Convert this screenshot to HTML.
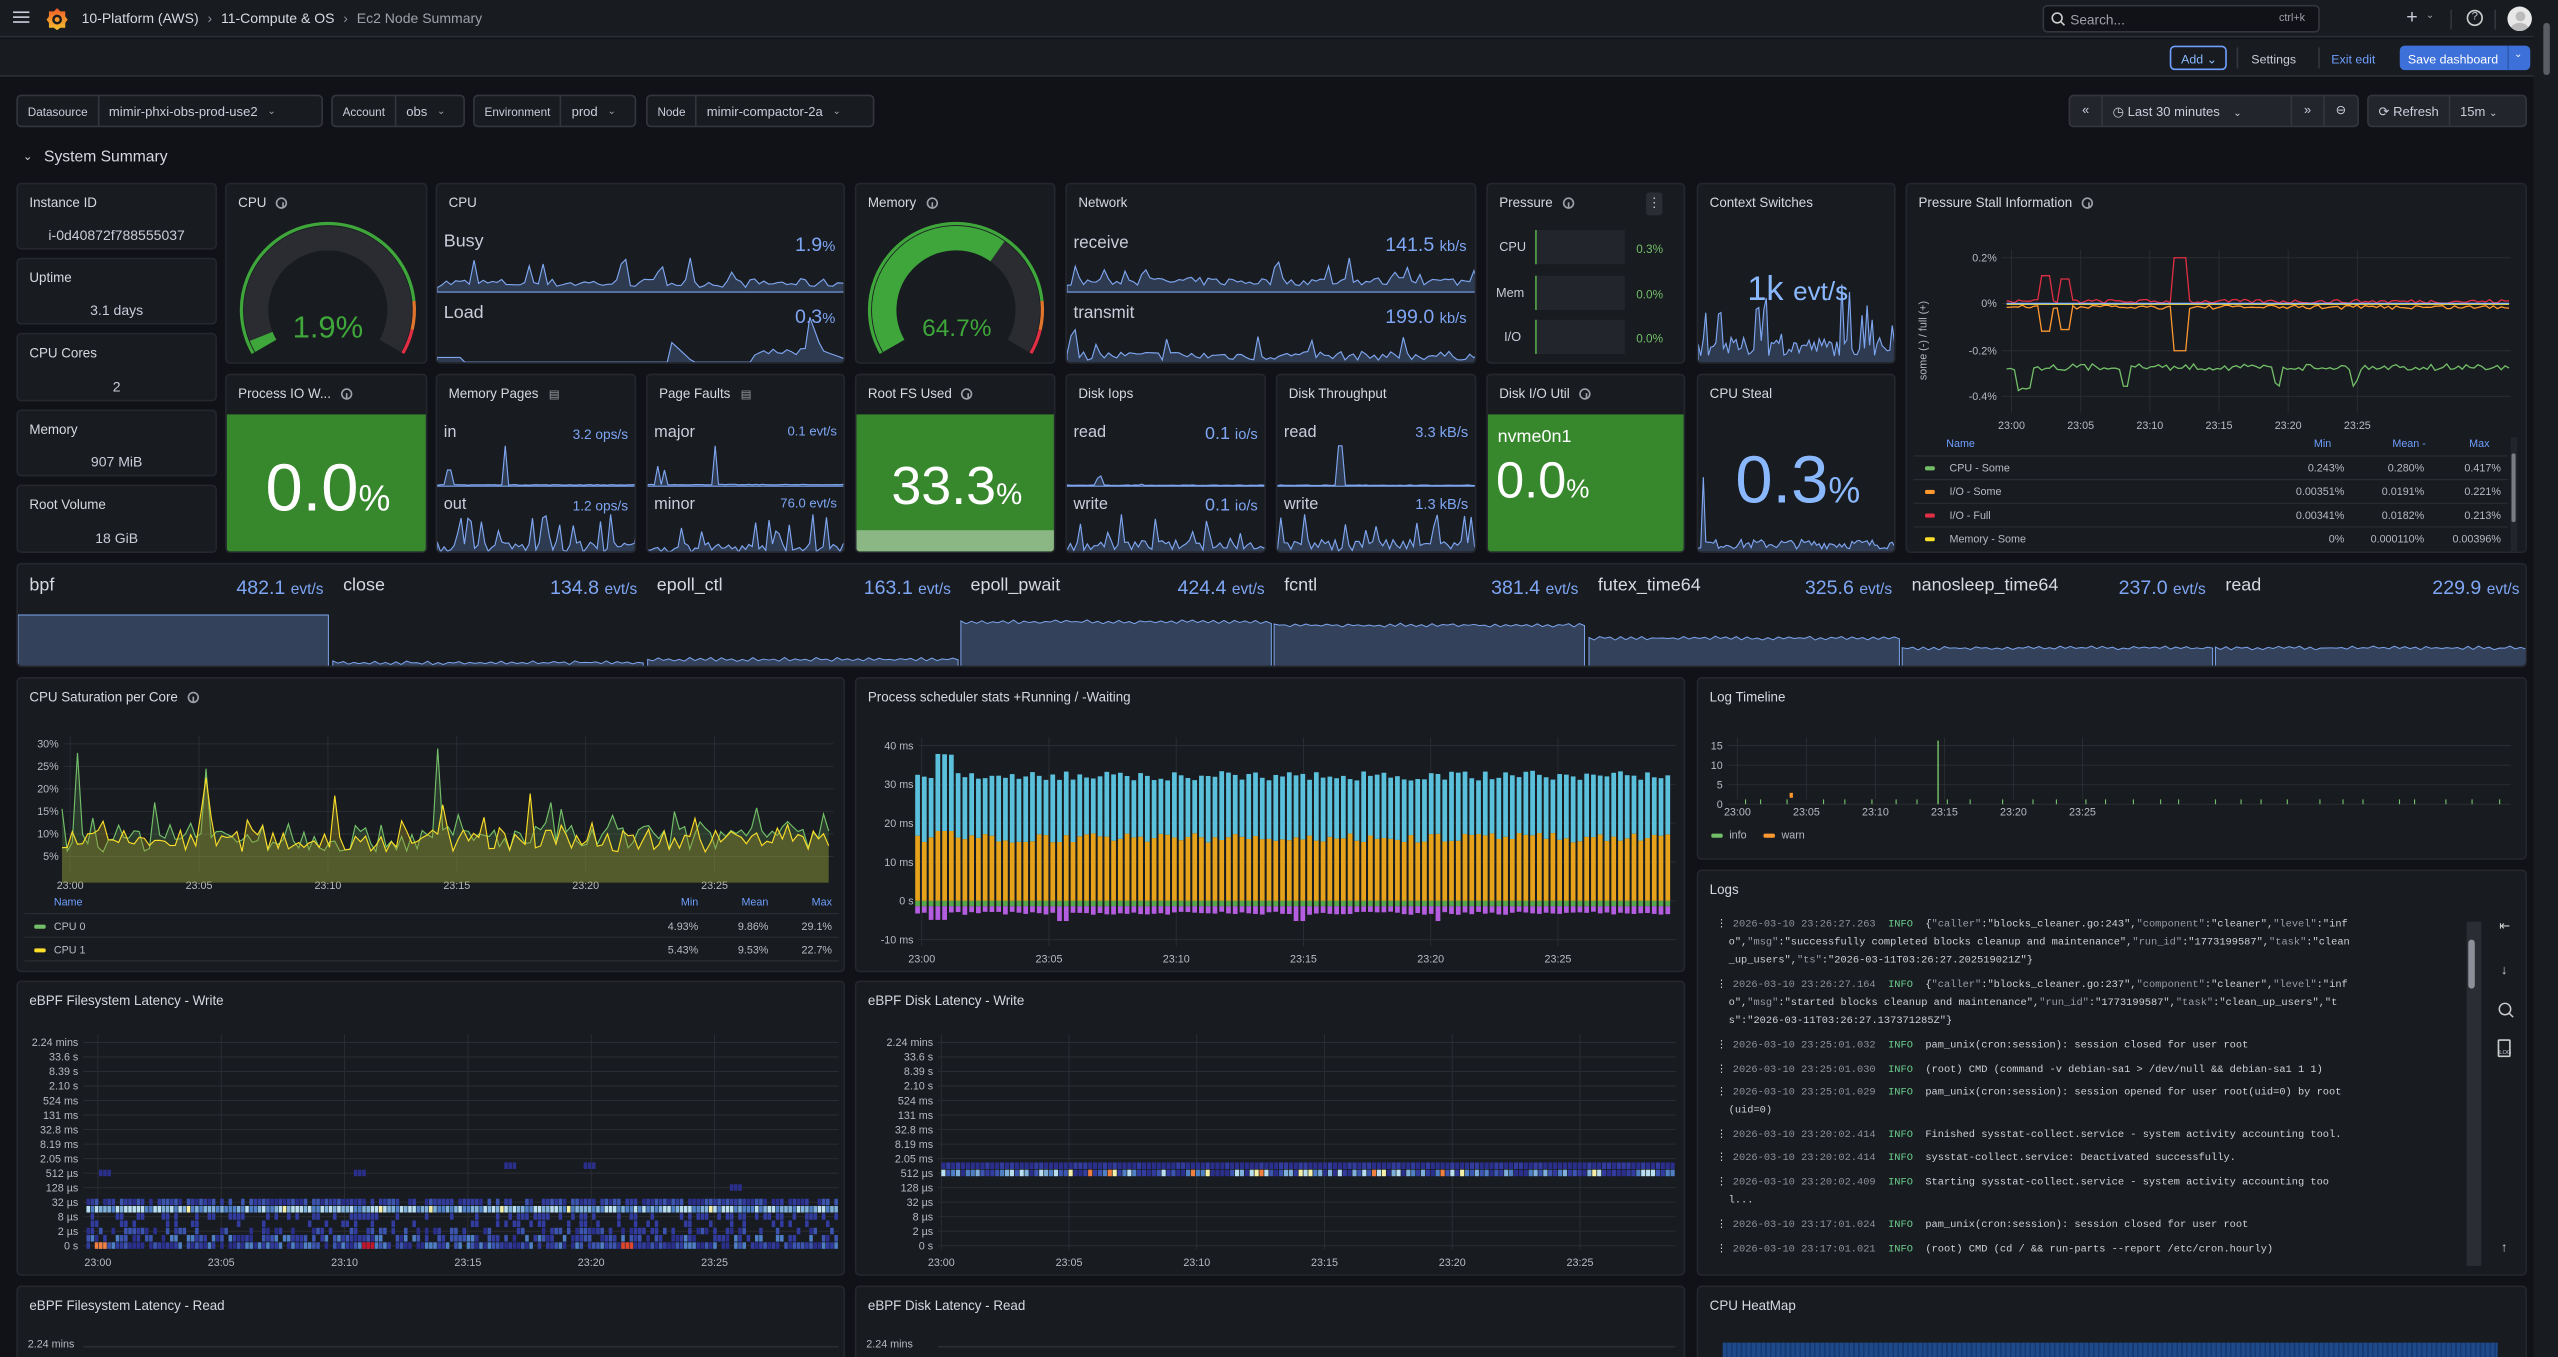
<!DOCTYPE html>
<html><head><meta charset="utf-8">
<style>
*{box-sizing:border-box;margin:0;padding:0}
html,body{width:2558px;height:1357px;overflow:hidden;background:#111217}
#r{position:absolute;left:0;top:0;width:1568px;height:832px;transform:scale(1.631378);transform-origin:0 0;font-family:"Liberation Sans",sans-serif;color:#ccccdc;background:#111217;overflow:hidden}
.a{position:absolute}
.p{position:absolute;background:#181b1f;border:1px solid #24272d;border-radius:3px;overflow:hidden}
.t{position:absolute;left:7px;top:7px;font-size:8.2px;color:#d8d9e0;white-space:nowrap}
.i{display:inline-block;width:7px;height:7px;border:0.8px solid #9fa1a8;border-radius:50%;margin-left:6px;vertical-align:-1px;position:relative}
.i:after{content:"";position:absolute;left:2.4px;top:2.2px;width:0.9px;height:2.6px;background:#9fa1a8}
.v{color:#7ea6f5}
svg{position:absolute;overflow:visible}
.vb{position:absolute;top:58px;height:20px;border:1px solid #33363c;border-radius:3px;background:#181b1f;font-size:7.8px;display:flex;align-items:center}
.vb span.l{padding:0 6px;border-right:1px solid #33363c;height:100%;display:flex;align-items:center;color:#ccccdc;font-size:7.2px}
.vb span.c{padding:0 6px;font-size:8px}
.ax{font-size:6.6px;fill:#b8bac2;font-family:"Liberation Sans",sans-serif}
.log{position:absolute;left:1052px;font-family:"Liberation Mono",monospace;font-size:6.35px;color:#d0d1d8;white-space:pre;line-height:11px}
.log b{font-weight:normal;color:#8e9099}
.log i{font-style:normal;color:#6ccf8e}
.log u{text-decoration:none;color:#9a9ca5}
</style></head><body><div id="r">

<!-- top bar -->
<div class="a" style="left:0;top:0;width:1568px;height:23px;background:#181b1f;border-bottom:1px solid #2b2e34"></div>
<div class="a" style="left:8px;top:7px;width:10px;height:1.3px;background:#ccccdc;box-shadow:0 3px 0 #ccccdc,0 6px 0 #ccccdc"></div>
<svg style="left:28px;top:4px" width="14" height="15" viewBox="0 0 14 15"><defs><linearGradient id="gg" x1="0" y1="1" x2="0" y2="0"><stop offset="0" stop-color="#f2c12e"/><stop offset="1" stop-color="#f05a28"/></linearGradient></defs><path d="M7 1 L9 3 L12 3 L12 6 L13.5 8 L12 10 L12 13 L9 13 L7 14.5 L5 13 L2 13 L2 10 L0.5 8 L2 6 L2 3 L5 3Z" fill="url(#gg)"/><circle cx="7" cy="8" r="3" fill="#181b1f"/><circle cx="7" cy="8" r="1.5" fill="#f59a2a"/></svg>
<div class="a" style="left:50px;top:6px;font-size:8.6px;color:#d8d9e0">10-Platform (AWS) <span style="color:#8e9099;margin:0 3px">›</span> 11-Compute &amp; OS <span style="color:#8e9099;margin:0 3px">›</span> <span style="color:#9fa1a8">Ec2 Node Summary</span></div>
<div class="a" style="left:1252px;top:3px;width:170px;height:17px;border:1px solid #33363c;border-radius:3px;background:#111217"></div>
<svg style="left:1257px;top:7px" width="9" height="9"><circle cx="4" cy="4" r="3" fill="none" stroke="#ccc" stroke-width="1"/><path d="M6.2 6.2 L8.5 8.5" stroke="#ccc" stroke-width="1"/></svg>
<div class="a" style="left:1269px;top:6.5px;font-size:8.4px;color:#9fa1a8">Search...</div>
<div class="a" style="left:1397px;top:7.5px;font-size:6.6px;color:#9fa1a8">ctrl+k</div>
<div class="a" style="left:1475px;top:3px;font-size:12px;color:#ccccdc">+</div>
<div class="a" style="left:1487px;top:6px;font-size:6px;color:#9fa1a8">⌄</div>
<div class="a" style="left:1502px;top:6px;width:1px;height:12px;background:#33363c"></div>
<div class="a" style="left:1512px;top:6px;width:10px;height:10px;border:1px solid #ccc;border-radius:50%;font-size:7px;text-align:center;line-height:8px">?</div>
<div class="a" style="left:1529px;top:6px;width:1px;height:12px;background:#33363c"></div>
<div class="a" style="left:1537px;top:4px;width:15px;height:15px;border-radius:50%;background:#e8e8e8;overflow:hidden"><div style="position:absolute;left:4.5px;top:3px;width:6px;height:6px;border-radius:50%;background:#bbb"></div><div style="position:absolute;left:2px;top:10px;width:11px;height:8px;border-radius:50%;background:#bbb"></div></div>
<!-- second bar -->
<div class="a" style="left:0;top:24px;width:1568px;height:23px;background:#181b1f;border-bottom:1px solid #2b2e34"></div>
<div class="a" style="left:1330px;top:28px;width:35px;height:15px;border:1px solid #6e9fff;border-radius:3px;font-size:7.6px;color:#8ab8ff;padding:3px 0 0 6px">Add ⌄</div>
<div class="a" style="left:1371px;top:29px;width:1px;height:13px;background:#33363c"></div>
<div class="a" style="left:1380px;top:31.5px;font-size:7.6px;color:#ccccdc">Settings</div>
<div class="a" style="left:1421px;top:29px;width:1px;height:13px;background:#33363c"></div>
<div class="a" style="left:1429px;top:31.5px;font-size:7.6px;color:#6e9fff">Exit edit</div>
<div class="a" style="left:1471px;top:28px;width:80px;height:15px;background:#3d71d9;border-radius:3px;font-size:7.6px;color:#fff;padding:3.5px 0 0 5px">Save dashboard <span style="position:absolute;left:66px;top:0;width:1px;height:15px;background:#2f5cb3"></span><span style="position:absolute;left:70px;top:2px;font-size:6px">⌄</span></div>
<!-- right scrollbar -->
<div class="a" style="left:1553px;top:0;width:15px;height:832px;background:#181b1f"></div>
<div class="a" style="left:1559px;top:14px;width:4px;height:32px;border-radius:2px;background:#5a5d63"></div>
<!-- variables -->
<div class="vb" style="left:10px;width:188px"><span class="l">Datasource</span><span class="c">mimir-phxi-obs-prod-use2</span><span style="font-size:6px;color:#9fa1a8">⌄</span></div>
<div class="vb" style="left:203px;width:82px"><span class="l">Account</span><span class="c">obs</span><span style="font-size:6px;color:#9fa1a8">⌄</span></div>
<div class="vb" style="left:290px;width:100px"><span class="l">Environment</span><span class="c">prod</span><span style="font-size:6px;color:#9fa1a8">⌄</span></div>
<div class="vb" style="left:396px;width:140px"><span class="l">Node</span><span class="c">mimir-compactor-2a</span><span style="font-size:6px;color:#9fa1a8">⌄</span></div>
<div class="vb" style="left:1268px;width:178px;background:#22252b"><span style="width:20px;text-align:center;border-right:1px solid #33363c;height:100%;line-height:18px">«</span><span style="padding:0 6px;font-size:8px;flex:1">◷ Last 30 minutes <span style="font-size:6px;margin-left:6px">⌄</span></span><span style="width:20px;text-align:center;border-left:1px solid #33363c;height:100%;line-height:18px">»</span><span style="width:21px;text-align:center;border-left:1px solid #33363c;height:100%;line-height:18px">⊖</span></div>
<div class="vb" style="left:1451px;width:98px;background:#22252b"><span style="padding:0 6px;font-size:8px;border-right:1px solid #33363c;height:100%;display:flex;align-items:center">⟳&nbsp;Refresh</span><span style="padding:0 6px;font-size:8px">15m <span style="font-size:6px">⌄</span></span></div>
<div class="a" style="left:14px;top:92px;font-size:7px;color:#ccc">⌄</div>
<div class="a" style="left:27px;top:91px;font-size:9.6px;color:#d8d9e0">System Summary</div>

<!-- left small stats -->
<div class="p" style="left:10px;top:112px;width:123px;height:41px"><div class="t">Instance ID</div><div class="a" style="left:0;width:121px;top:26px;text-align:center;font-size:8.6px">i-0d40872f788555037</div></div>
<div class="p" style="left:10px;top:158px;width:123px;height:41px"><div class="t">Uptime</div><div class="a" style="left:0;width:121px;top:26px;text-align:center;font-size:8.6px">3.1 days</div></div>
<div class="p" style="left:10px;top:204px;width:123px;height:42px"><div class="t">CPU Cores</div><div class="a" style="left:0;width:121px;top:27px;text-align:center;font-size:8.6px">2</div></div>
<div class="p" style="left:10px;top:251px;width:123px;height:41px"><div class="t">Memory</div><div class="a" style="left:0;width:121px;top:26px;text-align:center;font-size:8.6px">907 MiB</div></div>
<div class="p" style="left:10px;top:297px;width:123px;height:42px"><div class="t">Root Volume</div><div class="a" style="left:0;width:121px;top:27px;text-align:center;font-size:8.6px">18 GiB</div></div>

<!-- row1 -->
<div class="p" style="left:138px;top:112px;width:124px;height:111px"><div class="t">CPU<span class="i"></span></div><svg id="g1" style="left:0;top:0" width="124" height="111"></svg><div class="a" style="left:0;width:124px;top:78px;text-align:center;font-size:19px;color:#3ea63a">1.9%</div></div>
<div class="p" style="left:267px;top:112px;width:251px;height:111px"><div class="t">CPU</div>
<div class="a" style="left:4px;top:29px;font-size:11px">Busy</div><div class="a v" style="right:5px;top:30px;font-size:12px">1.9<span style="font-size:9px">%</span></div>
<svg id="s_busy" style="left:0;top:44px" width="251" height="22"></svg>
<div class="a" style="left:4px;top:73px;font-size:11px">Load</div><div class="a v" style="right:5px;top:74px;font-size:12px">0.3<span style="font-size:9px">%</span></div>
<svg id="s_load" style="left:0;top:80px" width="251" height="30"></svg></div>
<div class="p" style="left:524px;top:112px;width:123px;height:111px"><div class="t">Memory<span class="i"></span></div><svg id="g2" style="left:0;top:0" width="123" height="111"></svg><div class="a" style="left:0;width:123px;top:80px;text-align:center;font-size:15px;color:#3ea63a">64.7%</div></div>
<div class="p" style="left:653px;top:112px;width:252px;height:111px"><div class="t">Network</div>
<div class="a" style="left:4px;top:30px;font-size:10.5px">receive</div><div class="a v" style="right:5px;top:30px;font-size:12px">141.5 <span style="font-size:9px">kb/s</span></div>
<svg id="s_rx" style="left:0;top:44px" width="252" height="22"></svg>
<div class="a" style="left:4px;top:73px;font-size:10.5px">transmit</div><div class="a v" style="right:5px;top:74px;font-size:12px">199.0 <span style="font-size:9px">kb/s</span></div>
<svg id="s_tx" style="left:0;top:88px" width="252" height="22"></svg></div>
<div class="p" style="left:911px;top:112px;width:122px;height:111px"><div class="t">Pressure<span class="i"></span></div>
<div class="a" style="left:97px;top:5px;width:10px;height:14px;background:#2a2d33;border-radius:2px;font-size:8px;text-align:center;line-height:13px">⋮</div>
<div class="a" style="left:7px;top:34px;font-size:7.8px">CPU</div><div class="a" style="left:29px;top:28px;width:55px;height:21px;background:#22252b;border-left:1px solid #56a64b"></div><div class="a" style="left:91px;top:35px;font-size:7.2px;color:#73bf69">0.3%</div>
<div class="a" style="left:5px;top:62px;font-size:7.8px">Mem</div><div class="a" style="left:29px;top:56px;width:55px;height:21px;background:#22252b;border-left:1px solid #56a64b"></div><div class="a" style="left:91px;top:63px;font-size:7.2px;color:#73bf69">0.0%</div>
<div class="a" style="left:10px;top:89px;font-size:7.8px">I/O</div><div class="a" style="left:29px;top:83px;width:55px;height:21px;background:#22252b;border-left:1px solid #56a64b"></div><div class="a" style="left:91px;top:90px;font-size:7.2px;color:#73bf69">0.0%</div></div>
<div class="p" style="left:1040px;top:112px;width:122px;height:111px"><div class="t">Context Switches</div><svg id="s_cs" style="left:0;top:40px" width="122" height="71"></svg><div class="a v" style="left:0;width:122px;top:53px;text-align:center;font-size:21px;color:#8ab8ff">1k <span style="font-size:16px">evt/s</span></div></div>
<div class="p" style="left:1168px;top:112px;width:381px;height:227px"><div class="t">Pressure Stall Information<span class="i"></span></div><svg id="psi" style="left:0;top:0" width="381" height="227"></svg></div>

<!-- row2 -->
<div class="p" style="left:138px;top:229px;width:124px;height:110px"><div class="t">Process IO W...<span class="i"></span></div><div class="a" style="left:0;top:24px;width:124px;height:86px;background:#37872d"></div><div class="a" style="left:0;width:124px;top:46px;text-align:center;font-size:41px;color:#fff">0.0<span style="font-size:22px">%</span></div></div>
<div class="p" style="left:267px;top:229px;width:123px;height:110px"><div class="t">Memory Pages <span style="font-size:7px;color:#9fa1a8;margin-left:4px">▤</span></div>
<div class="a" style="left:4px;top:30px;font-size:10px">in</div><div class="a v" style="right:4px;top:31px;font-size:8.4px">3.2 ops/s</div><svg id="s_pin" style="left:0;top:42px" width="123" height="26"></svg>
<div class="a" style="left:4px;top:74px;font-size:10px">out</div><div class="a v" style="right:4px;top:75px;font-size:8.4px">1.2 ops/s</div><svg id="s_pout" style="left:0;top:84px" width="123" height="26"></svg></div>
<div class="p" style="left:396px;top:229px;width:122px;height:110px"><div class="t">Page Faults <span style="font-size:7px;color:#9fa1a8;margin-left:4px">▤</span></div>
<div class="a" style="left:4px;top:30px;font-size:10px">major</div><div class="a v" style="right:4px;top:30px;font-size:8px">0.1 evt/s</div><svg id="s_maj" style="left:0;top:42px" width="122" height="26"></svg>
<div class="a" style="left:4px;top:74px;font-size:10px">minor</div><div class="a v" style="right:4px;top:74px;font-size:8px">76.0 evt/s</div><svg id="s_min" style="left:0;top:84px" width="122" height="26"></svg></div>
<div class="p" style="left:524px;top:229px;width:123px;height:110px"><div class="t">Root FS Used<span class="i"></span></div><div class="a" style="left:0;top:24px;width:123px;height:86px;background:#37872d"></div><div class="a" style="left:0;top:95px;width:123px;height:15px;background:#8ab783"></div><div class="a" style="left:0;width:123px;top:49px;text-align:center;font-size:33px;color:#fff">33.3<span style="font-size:18px">%</span></div></div>
<div class="p" style="left:653px;top:229px;width:123px;height:110px"><div class="t">Disk Iops</div>
<div class="a" style="left:4px;top:30px;font-size:10px">read</div><div class="a v" style="right:4px;top:30px;font-size:11px">0.1 <span style="font-size:9px">io/s</span></div><svg id="s_dr" style="left:0;top:42px" width="123" height="26"></svg>
<div class="a" style="left:4px;top:74px;font-size:10px">write</div><div class="a v" style="right:4px;top:74px;font-size:11px">0.1 <span style="font-size:9px">io/s</span></div><svg id="s_dw" style="left:0;top:84px" width="123" height="26"></svg></div>
<div class="p" style="left:782px;top:229px;width:123px;height:110px"><div class="t">Disk Throughput</div>
<div class="a" style="left:4px;top:30px;font-size:10px">read</div><div class="a v" style="right:4px;top:30px;font-size:9px">3.3 kB/s</div><svg id="s_tr" style="left:0;top:42px" width="123" height="26"></svg>
<div class="a" style="left:4px;top:74px;font-size:10px">write</div><div class="a v" style="right:4px;top:74px;font-size:9px">1.3 kB/s</div><svg id="s_tw" style="left:0;top:84px" width="123" height="26"></svg></div>
<div class="p" style="left:911px;top:229px;width:122px;height:110px"><div class="t">Disk I/O Util<span class="i"></span></div><div class="a" style="left:0;top:24px;width:122px;height:86px;background:#37872d"></div><div class="a" style="left:6px;top:32px;font-size:11px;color:#fff">nvme0n1</div><div class="a" style="left:5px;top:47px;font-size:31px;color:#fff">0.0<span style="font-size:16px">%</span></div></div>
<div class="p" style="left:1040px;top:229px;width:122px;height:110px"><div class="t">CPU Steal</div><svg id="s_st" style="left:0;top:60px" width="122" height="50"></svg><div class="a" style="left:0;width:122px;top:41px;text-align:center;font-size:41px;color:#8ab8ff">0.3<span style="font-size:22px">%</span></div></div>

<!-- row3 syscalls -->
<div class="p" style="left:10px;top:345px;width:1539px;height:64px" id="sys"></div>

<!-- row4 -->
<div class="p" style="left:10px;top:415px;width:508px;height:181px"><div class="t">CPU Saturation per Core<span class="i"></span></div><svg id="sat" style="left:0;top:0" width="508" height="181"></svg></div>
<div class="p" style="left:524px;top:415px;width:509px;height:181px"><div class="t">Process scheduler stats +Running / -Waiting</div><svg id="sch" style="left:0;top:0" width="509" height="181"></svg></div>
<div class="p" style="left:1040px;top:415px;width:509px;height:112px"><div class="t">Log Timeline</div><svg id="lt" style="left:0;top:0" width="509" height="112"></svg></div>

<!-- logs -->
<div class="p" style="left:1040px;top:533px;width:509px;height:249px"><div class="t">Logs</div>
<div class="a" style="left:471px;top:31px;width:9px;height:211px;background:#2a2d33"></div>
<div class="a" style="left:472px;top:42px;width:4px;height:30px;background:#8e9099;border-radius:2px"></div>
<div class="a" style="left:491px;top:29px;font-size:8px;color:#ccc">⇤</div>
<div class="a" style="left:492px;top:56px;font-size:8px;color:#ccc">↓</div>
<svg style="left:490px;top:80px" width="10" height="10"><circle cx="4.5" cy="4.5" r="3.5" fill="none" stroke="#ccc" stroke-width="0.9"/><path d="M7 7L9.5 9.5" stroke="#ccc" stroke-width="0.9"/></svg>
<div class="a" style="left:490px;top:103px;width:8px;height:11px;border:0.9px solid #ccc;border-radius:1px;font-size:3.5px;padding-top:5px;text-align:center">LOG</div>
<div class="a" style="left:492px;top:226px;font-size:8px;color:#ccc">↑</div>
</div>
<div class="log" style="top:561px">⋮ <b>2026-03-10 23:26:27.263</b>  <i>INFO</i>  {<u>"caller"</u>:"blocks_cleaner.go:243",<u>"component"</u>:"cleaner",<u>"level"</u>:"inf
  o",<u>"msg"</u>:"successfully completed blocks cleanup and maintenance",<u>"run_id"</u>:"1773199587",<u>"task"</u>:"clean
  _up_users",<u>"ts"</u>:"2026-03-11T03:26:27.202519021Z"}</div>
<div class="log" style="top:598px">⋮ <b>2026-03-10 23:26:27.164</b>  <i>INFO</i>  {<u>"caller"</u>:"blocks_cleaner.go:237",<u>"component"</u>:"cleaner",<u>"level"</u>:"inf
  o",<u>"msg"</u>:"started blocks cleanup and maintenance",<u>"run_id"</u>:"1773199587",<u>"task"</u>:"clean_up_users","t
  s":"2026-03-11T03:26:27.137371285Z"}</div>
<div class="log" style="top:635px">⋮ <b>2026-03-10 23:25:01.032</b>  <i>INFO</i>  pam_unix(cron:session): session closed for user root</div>
<div class="log" style="top:650px">⋮ <b>2026-03-10 23:25:01.030</b>  <i>INFO</i>  (root) CMD (command -v debian-sa1 > /dev/null &amp;&amp; debian-sa1 1 1)</div>
<div class="log" style="top:664px">⋮ <b>2026-03-10 23:25:01.029</b>  <i>INFO</i>  pam_unix(cron:session): session opened for user root(uid=0) by root
  (uid=0)</div>
<div class="log" style="top:690px">⋮ <b>2026-03-10 23:20:02.414</b>  <i>INFO</i>  Finished sysstat-collect.service - system activity accounting tool.</div>
<div class="log" style="top:704px">⋮ <b>2026-03-10 23:20:02.414</b>  <i>INFO</i>  sysstat-collect.service: Deactivated successfully.</div>
<div class="log" style="top:719px">⋮ <b>2026-03-10 23:20:02.409</b>  <i>INFO</i>  Starting sysstat-collect.service - system activity accounting too
  l...</div>
<div class="log" style="top:745px">⋮ <b>2026-03-10 23:17:01.024</b>  <i>INFO</i>  pam_unix(cron:session): session closed for user root</div>
<div class="log" style="top:760px">⋮ <b>2026-03-10 23:17:01.021</b>  <i>INFO</i>  (root) CMD (cd / &amp;&amp; run-parts --report /etc/cron.hourly)</div>

<!-- row5/6 heatmaps -->
<div class="p" style="left:10px;top:601px;width:508px;height:181px"><div class="t">eBPF Filesystem Latency - Write</div><svg id="h1" style="left:0;top:0" width="508" height="181"></svg></div>
<div class="p" style="left:524px;top:601px;width:509px;height:181px"><div class="t">eBPF Disk Latency - Write</div><svg id="h2" style="left:0;top:0" width="509" height="181"></svg></div>
<div class="p" style="left:10px;top:788px;width:508px;height:60px"><div class="t">eBPF Filesystem Latency - Read</div><div class="a" style="left:6px;top:32px;font-size:6.6px;color:#b8bac2">2.24 mins</div><div class="a" style="left:40px;top:36px;width:463px;height:1px;background:#2a2d33"></div></div>
<div class="p" style="left:524px;top:788px;width:509px;height:60px"><div class="t">eBPF Disk Latency - Read</div><div class="a" style="left:6px;top:32px;font-size:6.6px;color:#b8bac2">2.24 mins</div><div class="a" style="left:50px;top:36px;width:452px;height:1px;background:#2a2d33"></div></div>
<div class="p" style="left:1040px;top:788px;width:509px;height:60px"><div class="t">CPU HeatMap</div><div class="a" style="left:15px;top:34px;width:475px;height:20px;background:repeating-linear-gradient(90deg,#1f4a8a 0 2px,#163a74 2px 3px)"></div></div>

<script>
var seed=7;function R(){seed=(seed*16807)%2147483647;return (seed-1)/2147483646;}
var NS="http://www.w3.org/2000/svg";
function E(svg,tag,at,txt){var e=document.createElementNS(NS,tag);for(var k in at)e.setAttribute(k,at[k]);if(txt!=null)e.textContent=txt;svg.appendChild(e);return e;}
function $(id){return document.getElementById(id);}
function series(n,base,amp,spk){var a=[];for(var i=0;i<n;i++){var v=base+amp*R();if(spk&&R()<spk)v+=amp*2*R()+amp;a.push(v);}return a;}
function spark(id,vals,opts){var s=$(id),w=+s.getAttribute('width'),h=+s.getAttribute('height');opts=opts||{};var mx=opts.max||Math.max.apply(null,vals);var n=vals.length,d="M0 "+h;for(var i=0;i<n;i++){var x=i*w/(n-1),y=h-vals[i]/mx*h*(opts.sc||0.95);d+=" L"+x.toFixed(1)+" "+y.toFixed(1);}d+=" L"+w+" "+h+"Z";E(s,'path',{d:d,fill:'#2e3a50',stroke:'#7ea6f0','stroke-width':0.7});}
function pol(cx,cy,r,a){a=a*Math.PI/180;return [cx+r*Math.sin(a),cy-r*Math.cos(a)];}
function arc(s,cx,cy,r,a0,a1,col,w){var p0=pol(cx,cy,r,a0),p1=pol(cx,cy,r,a1);E(s,'path',{d:"M"+p0[0]+" "+p0[1]+" A"+r+" "+r+" 0 "+((a1-a0)>180?1:0)+" 1 "+p1[0]+" "+p1[1],fill:'none',stroke:col,'stroke-width':w});}
function gauge(id,cx,cy,v){var s=$(id);var a0=-120,span=240;arc(s,cx,cy,44,a0,a0+span,'#2a2c32',15);arc(s,cx,cy,44,a0,a0+span*v,'#3ea63a',15);arc(s,cx,cy,53,a0,a0+span*0.85,'#3ea63a',2);arc(s,cx,cy,53,a0+span*0.85,a0+span*0.93,'#e0752d',2);arc(s,cx,cy,53,a0+span*0.93,a0+span,'#e02f44',2);}
gauge('g1',62,77,0.035);gauge('g2',61,77,0.647);
spark('s_busy',series(90,2,4,0.08),{});
var ld=[];for(var i=0;i<90;i++){var v=0.4;if(i<6)v=1.5;if(i>50&&i<56)v=6-(i-50);if(i>68)v=2+2*R();if(i>80&&i<84)v=14-(i-80)*3;if(i>=84)v=3-(i-84)*0.4;ld.push(Math.max(v,0.3));}spark('s_load',ld,{});
spark('s_rx',series(100,3,4,0.1),{});spark('s_tx',series(100,2,5,0.12),{});
spark('s_cs',series(80,2,4,0.15),{sc:0.7});
var st=[];for(var i=0;i<80;i++)st.push(i==2?40:(3+5*R()));spark('s_st',st,{});
function peak(n,base,pk){var a=[];for(var i=0;i<n;i++){var v=base+0.3*R();for(var j=0;j<pk.length;j++)if(i==pk[j][0])v=pk[j][1];a.push(v);}return a;}
spark('s_pin',peak(60,0.5,[[3,8],[4,8],[20,20]]),{});spark('s_pout',series(60,1,5,0.2),{});
spark('s_maj',peak(60,0.6,[[3,10],[5,8],[20,20]]),{});spark('s_min',series(60,1,5,0.2),{});
spark('s_dr',peak(60,0.3,[[9,4],[10,5],[22,1]]),{max:20});spark('s_dw',series(60,2,5,0.2),{});
spark('s_tr',peak(60,0.3,[[18,20],[19,20]]),{});spark('s_tw',series(60,2,6,0.2),{});
// syscalls
(function(){var sys=$('sys');var names=[["bpf","482.1"],["close","134.8"],["epoll_ctl","163.1"],["epoll_pwait","424.4"],["fcntl","381.4"],["futex_time64","325.6"],["nanosleep_time64","237.0"],["read","229.9"]];var tops=[31,59,57,34,36,44,50,50];var cw=192.3;
for(var k=0;k<8;k++){var x=k*cw;var d=document.createElement('div');d.className='a';d.style.cssText='left:'+(x+7)+'px;top:7px;font-size:11px;color:#d8d9e0';d.textContent=names[k][0];sys.appendChild(d);var v=document.createElement('div');v.className='a v';v.style.cssText='left:'+(x+90)+'px;width:'+(cw-95)+'px;text-align:right;top:7px;font-size:12px';v.innerHTML=names[k][1]+' <span style="font-size:9.5px">evt/s</span>';sys.appendChild(v);
var s=E(sys,'svg',{width:cw-2,height:64});s.style.left=(x+(k?1:0))+'px';s.style.top='0px';var d2="M0 64",n=60,t=tops[k];for(var i=0;i<n;i++){var xx=i*(cw-2)/(n-1),yy=t+(k==0?0:(i%2)*1.2+R()*1.2);d2+=" L"+xx.toFixed(1)+" "+yy.toFixed(1);}d2+=" L"+(cw-2)+" 64Z";E(s,'path',{d:d2,fill:'#33425a',stroke:'#7ea6f0','stroke-width':0.6});}})();
function grid(s,x0,x1,ys,xs,ylab,xlabY){for(var i=0;i<ys.length;i++){E(s,'line',{x1:x0,x2:x1,y1:ys[i][0],y2:ys[i][0],stroke:'#2a2d33','stroke-width':0.6});E(s,'text',{x:x0-3,y:ys[i][0]+2.3,'text-anchor':'end','class':'ax'},ys[i][1]);}
for(var j=0;j<xs.length;j++){E(s,'line',{x1:xs[j][0],x2:xs[j][0],y1:ys[0][0]-5,y2:xlabY-10,stroke:'#2a2d33','stroke-width':0.6});E(s,'text',{x:xs[j][0],y:xlabY,'text-anchor':'middle','class':'ax'},xs[j][1]);}}
var T=["23:00","23:05","23:10","23:15","23:20","23:25"];
// PSI
(function(){var s=$('psi');var ys=[[45,"0.2%"],[73,"0%"],[102,"-0.2%"],[130,"-0.4%"]];var xs=[];for(var i=0;i<6;i++)xs.push([64+i*42.4,T[i]]);grid(s,58,370,ys,xs,0,150);
E(s,'text',{x:0,y:0,transform:'translate(12,120) rotate(-90)','class':'ax','font-size':'5.6'},'some (-) / full (+)');
var n=130,x0=61,x1=369;function line(col,fn){var d="";for(var i=0;i<n;i++){var x=x0+(x1-x0)*i/(n-1);d+=(i?" L":"M")+x.toFixed(1)+" "+fn(i).toFixed(1);}E(s,'path',{d:d,fill:'none',stroke:col,'stroke-width':0.8});}
line('#e02f44',function(i){if(i>=9&&i<=11)return 56;if(i>=14&&i<=16)return 58;if(i>=43&&i<=46)return 45;return 73-R()*2.5;});
line('#ff9830',function(i){if(i>=9&&i<=11)return 90;if(i>=14&&i<=16)return 89;if(i>=43&&i<=46)return 102;return 74+R()*2.5;});
line('#fade2a',function(i){return 73.5;});line('#8ab8ff',function(i){return 73;});
line('#73bf69',function(i){if(i>=3&&i<=6)return 122+R()*6;if(i==30||i==31||i==69||i==70||i==89||i==90)return 120+R()*4;return 110+R()*4;});
var ty=161;[["Name",24,'start'],["Min",260,'end'],["Mean -",318,'end'],["Max",357,'end']].forEach(function(a){E(s,'text',{x:a[1],y:ty,'text-anchor':a[2],'class':'ax',style:'fill:#6e9fff'},a[0]);});
var rows=[["#73bf69","CPU - Some","0.243%","0.280%","0.417%"],["#ff9830","I/O - Some","0.00351%","0.0191%","0.221%"],["#e02f44","I/O - Full","0.00341%","0.0182%","0.213%"],["#fade2a","Memory - Some","0%","0.000110%","0.00396%"]];
for(var r=0;r<4;r++){var y=176+r*14.5;E(s,'line',{x1:4,x2:368,y1:y-9.5,y2:y-9.5,stroke:'#2a2d33','stroke-width':0.7});E(s,'rect',{x:11,y:y-3.2,width:6,height:2.5,fill:rows[r][0],rx:1});E(s,'text',{x:26,y:y,'class':'ax'},rows[r][1]);E(s,'text',{x:268,y:y,'text-anchor':'end','class':'ax'},rows[r][2]);E(s,'text',{x:317,y:y,'text-anchor':'end','class':'ax'},rows[r][3]);E(s,'text',{x:364,y:y,'text-anchor':'end','class':'ax'},rows[r][4]);}
E(s,'rect',{x:370,y:155,width:4,height:70,fill:'#22252b'});E(s,'rect',{x:370.5,y:165,width:2.5,height:42,fill:'#7a7c83',rx:1});})();
// CPU saturation
(function(){var s=$('sat');var ys=[];for(var i=0;i<6;i++)ys.push([40+i*13.8,(30-5*i)+"%"]);var xs=[];for(var i=0;i<6;i++)xs.push([32+i*79,T[i]]);grid(s,28,500,ys,xs,0,129);
var n=150,x0=27,x1=497,bot=125;function yv(v){return 109-(v-5)*2.76;}
function path(col,fc,fn){var d="M"+x0+" "+bot,dl="";for(var i=0;i<n;i++){var x=x0+(x1-x0)*i/(n-1),y=yv(fn(i));d+=" L"+x.toFixed(1)+" "+y.toFixed(1);dl+=(i?" L":"M")+x.toFixed(1)+" "+y.toFixed(1);}d+=" L"+x1+" "+bot+"Z";E(s,'path',{d:d,fill:fc});E(s,'path',{d:dl,fill:'none',stroke:col,'stroke-width':0.7});}
path('#73bf69','rgba(115,191,105,0.2)',function(i){if(i==3)return 28;if(i==28)return 24.5;if(i==73)return 29;if(i==18)return 17;if(i==95)return 17;return 6+R()*6+(R()<0.1?4:0);});
path('#fade2a','rgba(160,150,40,0.35)',function(i){if(i==28)return 22.5;if(i==53)return 18.5;if(i==91)return 19;if(i==74)return 16.5;return 6+R()*5+(R()<0.1?4:0);});
E(s,'text',{x:22,y:139,'class':'ax',style:'fill:#6e9fff'},'Name');E(s,'text',{x:417,y:139,'class':'ax','text-anchor':'end',style:'fill:#6e9fff'},'Min');E(s,'text',{x:460,y:139,'class':'ax','text-anchor':'end',style:'fill:#6e9fff'},'Mean');E(s,'text',{x:499,y:139,'text-anchor':'end','class':'ax',style:'fill:#6e9fff'},'Max');
var rows=[["#73bf69","CPU 0","4.93%","9.86%","29.1%"],["#fade2a","CPU 1","5.43%","9.53%","22.7%"]];for(var r=0;r<2;r++){var y=154+r*14.5;E(s,'line',{x1:4,x2:503,y1:y-10,y2:y-10,stroke:'#2a2d33','stroke-width':0.7});E(s,'rect',{x:10,y:y-3.2,width:7,height:2.5,fill:rows[r][0],rx:1});E(s,'text',{x:22,y:y,'class':'ax'},rows[r][1]);E(s,'text',{x:417,y:y,'text-anchor':'end','class':'ax'},rows[r][2]);E(s,'text',{x:460,y:y,'text-anchor':'end','class':'ax'},rows[r][3]);E(s,'text',{x:499,y:y,'text-anchor':'end','class':'ax'},rows[r][4]);}
E(s,'line',{x1:4,x2:503,y1:173,y2:173,stroke:'#2a2d33','stroke-width':0.7});})();
// scheduler
(function(){var s=$('sch');var ys=[];var lab=["40 ms","30 ms","20 ms","10 ms","0 s","-10 ms"];for(var i=0;i<6;i++)ys.push([41+i*23.8,lab[i]]);var xs=[];for(var i=0;i<6;i++)xs.push([40+i*78,T[i]]);grid(s,38,502,ys,xs,0,174);
var n=112,x0=36,x1=500,z=136.2,k=2.38,bw=(x1-x0)/n;for(var i=0;i<n;i++){var x=x0+i*bw;var o=15+R()*2.5,b=31+R()*2.5;if(i>=3&&i<=5){b=36+R()*2;o=18;}var g=1.4,p=1.4+R()*0.8;if(i>=2&&i<=4)p=3.5;if(i==21||i==22||i==56||i==57||i==77)p=3.8;
E(s,'rect',{x:x.toFixed(2),y:z-o*k,width:(bw*0.7).toFixed(2),height:o*k,fill:'#e5a21a'});E(s,'rect',{x:x.toFixed(2),y:z-b*k,width:(bw*0.7).toFixed(2),height:(b-o)*k,fill:'#5ac0dc'});E(s,'rect',{x:x.toFixed(2),y:z,width:(bw*0.7).toFixed(2),height:g*k,fill:'#56a64b'});E(s,'rect',{x:x.toFixed(2),y:z+g*k,width:(bw*0.7).toFixed(2),height:p*k,fill:'#b45de0'});}})();
// log timeline
(function(){var s=$('lt');var ys=[[41,"15"],[53,"10"],[65,"5"],[77,"0"]];var xs=[];for(var i=0;i<6;i++)xs.push([24+i*42.3,T[i]]);grid(s,18,498,ys,xs,0,84);
for(var i=0;i<30;i++){var x=22+i*16+R()*8;E(s,'line',{x1:x,x2:x,y1:77,y2:74,stroke:'#73bf69','stroke-width':0.7});}E(s,'line',{x1:147,x2:147,y1:77,y2:38,stroke:'#73bf69','stroke-width':0.9});E(s,'rect',{x:56,y:70,width:2,height:3,fill:'#ff9830'});
E(s,'rect',{x:8,y:95,width:7,height:2.5,fill:'#73bf69',rx:1});E(s,'text',{x:19,y:98,'class':'ax'},'info');E(s,'rect',{x:40,y:95,width:7,height:2.5,fill:'#ff9830',rx:1});E(s,'text',{x:51,y:98,'class':'ax'},'warn');})();
// heatmaps
function heat(id,mode){var s=$(id);var lab=["2.24 mins","33.6 s","8.39 s","2.10 s","524 ms","131 ms","32.8 ms","8.19 ms","2.05 ms","512 µs","128 µs","32 µs","8 µs","2 µs","0 s"];var x0=mode?52:42,x1=mode?502:503;var ys=[];for(var i=0;i<15;i++)ys.push([37+i*8.9,lab[i]]);var xs=[];for(var i=0;i<6;i++)xs.push([(mode?52:49)+i*(mode?78.3:75.6),T[i]]);grid(s,x0-2,x1,ys,xs,0,174);
var n=mode?150:180,cw=(x1-x0)/n;var pal=['#2a2f8c','#313c9e','#3b55b0','#4f7fc4','#7fb0da','#b8def0','#f5f0a8'];
function c(i,r,col){E(s,'rect',{x:(x0+i*cw).toFixed(2),y:(37+r*4.45-2.1).toFixed(2),width:(cw*0.85).toFixed(2),height:4,fill:col});}
if(!mode){for(var i=0;i<n;i++){
 if(R()<0.8)c(i,22,pal[Math.floor(R()*3)]);
 var lv=3+Math.floor(R()*3);if(R()<0.04)lv=6;c(i,23,pal[lv]);
 if(R()<0.35)c(i,24,pal[1]);if(R()<0.3)c(i,25,pal[1]);if(R()<0.5)c(i,26,pal[Math.floor(R()*3)]);if(R()<0.65)c(i,27,pal[Math.floor(R()*4)]);if(R()<0.88)c(i,28,pal[Math.floor(R()*4)]);}
 [[3,18],[4,18],[5,18],[64,18],[65,18],[66,18],[100,17],[101,17],[102,17],[119,17],[120,17],[121,17],[154,20],[155,20],[156,20]].forEach(function(a){c(a[0],a[1],pal[0]);});
 [[2,'#f08040'],[3,'#f08040'],[4,'#f08040'],[66,'#c4162a'],[67,'#c4162a'],[68,'#c4162a'],[128,'#e0462a'],[129,'#e0462a'],[130,'#e0462a']].forEach(function(a){c(a[0],28,a[1]);});}
else{for(var i=0;i<n;i++){c(i,17,pal[R()<0.3?1:0]);var lv=Math.floor(R()*6);if(R()<0.08)lv=6;var col=pal[lv];if(R()<0.05)col='#f08040';c(i,18,col);}}}
heat('h1',0);heat('h2',1);
</script>
</div></body></html>
